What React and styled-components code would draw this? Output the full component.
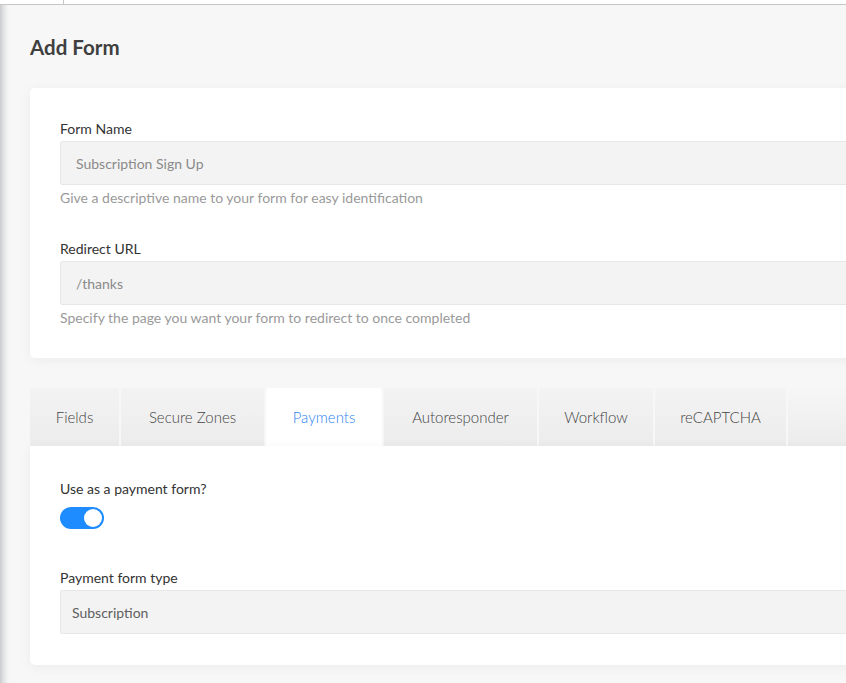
import React, { useState } from 'react'
import styled, { createGlobalStyle } from 'styled-components'

const GlobalStyle = createGlobalStyle`
  html, body {
    margin: 0;
    padding: 0;
    background: #f7f7f7;
    overflow: hidden;
  }
  * {
    box-sizing: border-box;
  }
`

const Page = styled.div`
  display: flex;
  width: 846px;
  height: 683px;
  overflow: hidden;
  font-family: 'Lato', 'Noto Sans', sans-serif;
  color: #333;
`

const Shade = styled.div`
  flex: 0 0 9px;
  background: linear-gradient(to right, #c9cbce 0%, #dcdee0 30%, #eeeeee 70%, #f7f7f7 100%);
`

const Main = styled.div`
  flex: 1;
  display: flex;
  flex-direction: column;
  min-width: 0;
`

const TopBar = styled.div`
  height: 5px;
  flex: 0 0 5px;
  background: #ffffff;
  border-bottom: 1px solid #c6c6c6;
  margin-left: -9px;
  display: flex;
`

const TopCell = styled.div`
  width: 64px;
  border-right: 1px solid #c6c6c6;
`

const Content = styled.div`
  padding: 32px 0 0 21px;
  width: 880px;
`

const Title = styled.h1`
  margin: 0 0 31px;
  font-size: 20.5px;
  line-height: 20px;
  font-weight: 700;
  color: #3f3f3f;
`

const Card = styled.div`
  background: #ffffff;
  border-radius: 5px;
  box-shadow: 0 2px 12px rgba(0, 0, 0, 0.05);
  padding: ${p => p.$pad};
  display: flex;
  flex-direction: column;
  gap: ${p => p.$gap}px;
  border-top-left-radius: ${p => (p.$flatTop ? '0' : '5px')};
`

const Field = styled.div`
  display: flex;
  flex-direction: column;
`

const Label = styled.label`
  display: block;
  font-size: 14px;
  line-height: 18px;
  color: #333;
  margin-bottom: 3px;
`

const Input = styled.div`
  height: 44px;
  background: #f3f3f3;
  border: 1px solid #e7e7e7;
  border-radius: 2px;
  display: flex;
  align-items: center;
  padding-left: ${p => p.$indent || '15px'};
  font-size: 14px;
  color: ${p => (p.$dark ? '#5f5f5f' : '#8a8a8a')};
`

const Help = styled.div`
  margin-top: 5px;
  font-size: 14px;
  line-height: 16px;
  color: #9a9a9a;
`

const TabSection = styled.div`
  margin-top: 30px;
  display: flex;
  flex-direction: column;
`

const TabBar = styled.div`
  display: flex;
  height: 58px;
  gap: 2px;
`

const Tab = styled.div`
  display: flex;
  align-items: center;
  justify-content: center;
  flex: 0 0 ${p => p.$w}px;
  border-radius: 3px 3px 0 0;
  font-size: 15px;
  font-weight: 300;
  color: ${p => (p.$active ? '#2c84f2' : '#444')};
  background: ${p =>
    p.$active ? '#ffffff' : 'linear-gradient(to bottom, #f3f3f3 0%, #ececec 100%)'};
`

const TabFill = styled.div`
  flex: 1;
  border-radius: 3px 3px 0 0;
  background: linear-gradient(to bottom, #f6f6f6 0%, #ececec 100%);
`

const Toggle = styled.button`
  width: 44px;
  height: 22px;
  margin-top: 6px;
  border: none;
  border-radius: 11px;
  padding: 0;
  background: #1e8cff;
  display: flex;
  align-items: center;
  justify-content: ${p => (p.$on ? 'flex-end' : 'flex-start')};
  cursor: pointer;
`

const Knob = styled.span`
  width: 18px;
  height: 18px;
  margin: 0 2px;
  border-radius: 50%;
  background: #ffffff;
`

const tabs = [
  { name: 'Fields', w: 89 },
  { name: 'Secure Zones', w: 143 },
  { name: 'Payments', w: 116 },
  { name: 'Autoresponder', w: 153 },
  { name: 'Workflow', w: 114 },
  { name: 'reCAPTCHA', w: 131 },
]

const App = () => {
  const [on, setOn] = useState(true)
  return (
    <Page>
      <GlobalStyle />
      <Shade />
      <Main>
        <TopBar>
          <TopCell />
        </TopBar>
        <Content>
          <Title>Add Form</Title>
          <Card $pad="32px 30px 32px" $gap={34}>
            <Field>
              <Label>Form Name</Label>
              <Input>Subscription Sign Up</Input>
              <Help>Give a descriptive name to your form for easy identification</Help>
            </Field>
            <Field>
              <Label>Redirect URL</Label>
              <Input>/thanks</Input>
              <Help>Specify the page you want your form to redirect to once completed</Help>
            </Field>
          </Card>
          <TabSection>
            <TabBar>
              {tabs.map(t => (
                <Tab key={t.name} $w={t.w} $active={t.name === 'Payments'}>
                  {t.name}
                </Tab>
              ))}
              <TabFill />
            </TabBar>
            <Card $pad="34px 30px 31px" $gap={40} $flatTop>
              <Field>
                <Label>Use as a payment form?</Label>
                <Toggle $on={on} onClick={() => setOn(!on)}>
                  <Knob />
                </Toggle>
              </Field>
              <Field>
                <Label>Payment form type</Label>
                <Input $dark $indent="11px">Subscription</Input>
              </Field>
            </Card>
          </TabSection>
        </Content>
      </Main>
    </Page>
  )
}

export default App
